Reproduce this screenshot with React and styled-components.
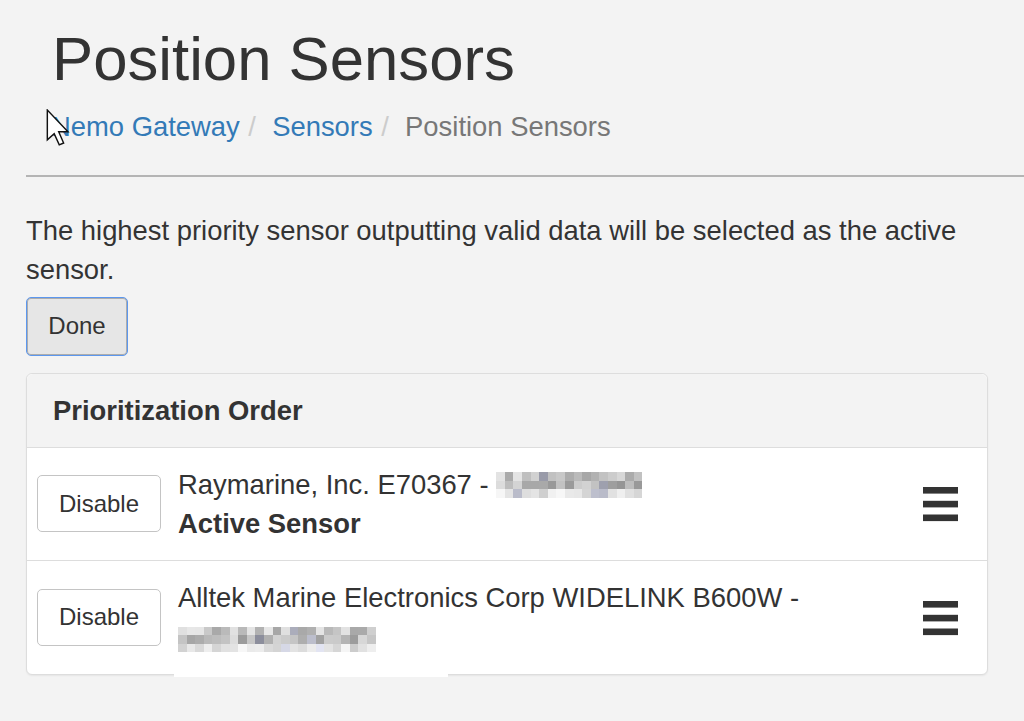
import React from "react";
import styled, { createGlobalStyle } from "styled-components";

const GlobalStyle = createGlobalStyle`
  html, body { margin: 0; padding: 0; }
  body {
    background: #f3f3f3;
    font-family: "Liberation Sans", Arial, Helvetica, sans-serif;
    color: #333;
    font-size: 27.4px;
    line-height: 39.2px;
    overflow: hidden;
  }
  * { box-sizing: border-box; }
`;

const Page = styled.div`
  position: relative;
  padding-left: 26px;
  width: 1024px;
  min-height: 721px;
`;

const Header = styled.header`
  padding-top: 25px;
  padding-bottom: 29px;
  border-bottom: 2px solid #b4b4b4;
`;

const Title = styled.h1`
  margin: 0;
  padding-left: 26px;
  font-size: 61.7px;
  line-height: 67.9px;
  font-weight: 400;
  color: #333;
`;

const Crumbs = styled.ol`
  list-style: none;
  margin: 14px 0 0;
  padding: 0 0 0 25px;
  display: flex;
  font-size: 27.4px;
  line-height: 39.2px;
`;

const Crumb = styled.li`
  color: ${(p) => (p.$active ? "#777" : "#337ab7")};
  &:not(:first-child)::before {
    content: "/\\00a0";
    padding: 0 8.6px;
    color: #ccc;
  }
`;

const Intro = styled.p`
  margin: 34px 36px 0 0;
  font-size: 27.4px;
  line-height: 39.2px;
`;

const Button = styled.button`
  font-family: inherit;
  font-size: 24px;
  line-height: 34px;
  color: #333;
  border-radius: 5px;
  cursor: pointer;
  ${(p) =>
    p.$focused
      ? `
    background: #e6e6e6;
    border: 1.5px solid #5c97ee;
    box-shadow: inset 0 0 0 1px #adadad;
  `
      : `
    background: #fff;
    border: 1px solid #c4c4c4;
  `}
  width: ${(p) => p.$w}px;
  height: ${(p) => p.$h}px;
  padding: 0;
  flex: none;
`;

const DoneRow = styled.div`
  margin-top: 7px;
  display: flex;
`;

const Panel = styled.section`
  position: relative;
  margin: 17px 36px 0 0;
  border: 1px solid #ddd;
  border-radius: 6px;
  background: #fff;
  box-shadow: 0 1px 2px rgba(0, 0, 0, 0.06);
`;

const PanelHeading = styled.div`
  background: #f3f3f3;
  border-bottom: 1px solid #ddd;
  border-radius: 6px 6px 0 0;
  padding: 17px 26px 17px;
  font-weight: 700;
  font-size: 27.4px;
  line-height: 39.2px;
`;

const Row = styled.div`
  display: flex;
  align-items: center;
  padding: 17px 29px 17px 10px;
  & + & {
    border-top: 1px solid #ddd;
  }
`;

const RowText = styled.div`
  flex: 1;
  margin-left: 17px;
  font-size: 27.4px;
  line-height: 39.2px;
  min-height: 78.4px;
`;

const Strong = styled.div`
  font-weight: 700;
`;

const MosaicBox = styled.span`
  display: inline-block;
  overflow: hidden;
  vertical-align: ${(p) => p.$va}px;
  line-height: 0;
`;

const MosaicGrid = styled.span`
  display: grid;
  grid-template-columns: repeat(${(p) => p.$cols}, 8.6px);
  grid-auto-rows: 8.6px;
  filter: blur(0.5px);
`;

const Cell = styled.span`
  display: block;
`;

const Handle = styled.svg`
  flex: none;
  width: 35px;
  height: 35px;
  margin-top: 2px;
`;

const Smudge = styled.div`
  position: absolute;
  left: 147px;
  bottom: -3px;
  width: 274px;
  height: 8px;
  background: #fff;
`;

const Pointer = styled.svg`
  position: absolute;
  left: 46px;
  top: 109px;
  width: 24px;
  height: 38px;
  pointer-events: none;
`;

function greys(seed, cols) {
  let s = seed;
  const rnd = () => {
    s = (s * 9301 + 49297) % 233280;
    return s / 233280;
  };
  const rows = [
    [165, 70],
    [135, 85],
    [204, 44],
  ];
  const out = [];
  rows.forEach(([base, range]) => {
    for (let c = 0; c < cols; c++) {
      const v = Math.round(base + rnd() * range);
      const blue = rnd() > 0.93;
      out.push(
        blue ? `rgb(${v - 20},${v - 18},${v - 4})` : `rgb(${v},${v},${v})`
      );
    }
  });
  return out;
}

function Redacted({ seed, cols, va }) {
  const cells = greys(seed, cols);
  return (
    <MosaicBox $va={va}>
      <MosaicGrid $cols={cols}>
        {cells.map((c, i) => (
          <Cell key={i} style={{ background: c }} />
        ))}
      </MosaicGrid>
    </MosaicBox>
  );
}

function Bars() {
  return (
    <Handle viewBox="0 0 35 35">
      <rect x="0" y="0" width="35" height="6.6" fill="#333" />
      <rect x="0" y="13.8" width="35" height="6.6" fill="#333" />
      <rect x="0" y="27.5" width="35" height="6.6" fill="#333" />
    </Handle>
  );
}

export default function App() {
  return (
    <>
      <GlobalStyle />
      <Page>
        <Header>
          <Title>Position Sensors</Title>
          <Crumbs>
            <Crumb>Nemo Gateway</Crumb>
            <Crumb>Sensors</Crumb>
            <Crumb $active>Position Sensors</Crumb>
          </Crumbs>
        </Header>
        <Intro>
          The highest priority sensor outputting valid data will be selected as
          the active sensor.
        </Intro>
        <DoneRow>
          <Button $focused $w={102} $h={59}>
            Done
          </Button>
        </DoneRow>
        <Panel>
          <PanelHeading>Prioritization Order</PanelHeading>
          <Row>
            <Button $w={124} $h={57}>
              Disable
            </Button>
            <RowText>
              Raymarine, Inc. E70367 - <Redacted seed={17} cols={17} va={-4} />
              <Strong>Active Sensor</Strong>
            </RowText>
            <Bars />
          </Row>
          <Row>
            <Button $w={124} $h={57}>
              Disable
            </Button>
            <RowText>
              Alltek Marine Electronics Corp WIDELINK B600W -
              <div>
                <Redacted seed={91} cols={23} va={-6} />
              </div>
            </RowText>
            <Bars />
          </Row>
          <Smudge />
        </Panel>
        <Pointer viewBox="0 0 13 21">
          <path
            d="M0.6 0.6 L0.6 17 L4.4 13.6 L7.2 19.8 L9.6 18.8 L6.9 12.6 L12 12.6 Z"
            fill="#fff"
            stroke="#111"
            strokeWidth="0.8"
            strokeLinejoin="miter"
          />
        </Pointer>
      </Page>
    </>
  );
}
